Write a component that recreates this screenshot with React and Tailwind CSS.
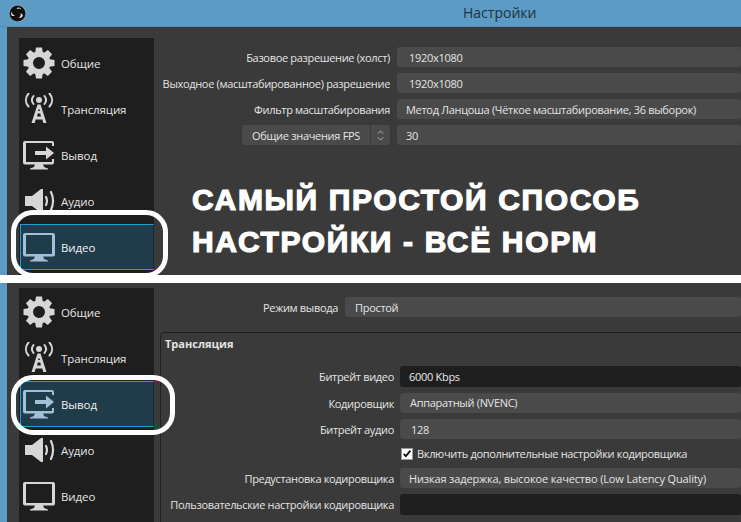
const font = { fontFamily: '"Open Sans","Noto Sans",sans-serif' };

function Gear({ className }) {
  const teeth = [0, 45, 90, 135, 180, 225, 270, 315];
  return (
    <svg viewBox="0 0 32 32" className={className} fill="currentColor">
      {teeth.map((a) => (
        <path key={a} d="M13 0.500h6l0.800 5h-7.600z" transform={`rotate(${a} 16 16)`} />
      ))}
      <path fillRule="evenodd" d="M16 4.500a11.500 11.500 0 1 1 0 23a11.500 11.500 0 1 1 0-23zM16 10a6 6 0 1 0 0 12a6 6 0 1 0 0-12z" />
    </svg>
  );
}
function Antenna({ className }) {
  return (
    <svg viewBox="0 0 32 32" className={className} fill="none" stroke="currentColor">
      <circle cx="16" cy="7" r="3" fill="currentColor" stroke="none" />
      <path strokeWidth="2" strokeLinecap="round" d="M10.500 3c-2 2.500-2 5.500 0 8M21.500 3c2 2.500 2 5.500 0 8M5.500 0.500c-3.500 4-3.500 9 0 13M26.500 0.500c3.500 4 3.500 9 0 13" />
      <path fill="currentColor" stroke="none" fillRule="evenodd" d="M14.500 11.500h3l6 18.500h-3.200l-1-3.500h-6.600l-1 3.500h-3.200zM14.700 20.500l-0.600 3h3.800l-0.600-3zM15.300 16.500l-0.200 1.500h1.800l-0.200-1.500z" />
    </svg>
  );
}
function MonitorArrow({ className }) {
  return (
    <svg viewBox="0 0 32 32" className={className} fill="currentColor">
      <path d="M2 2h27a2 2 0 0 1 2 2v3h-2V4H3v19h26v-3h2v3.500a2 2 0 0 1-2 2H2a2 2 0 0 1-2-2V4a2 2 0 0 1 2-2z" />
      <path d="M12 25h8l1 3 4 1.500v1H7v-1l4-1.500z" />
      <path d="M12 12h11V7.500l8 6.500-8 6.500V16H12z" />
    </svg>
  );
}
function Speaker({ className }) {
  return (
    <svg viewBox="0 0 32 32" className={className} fill="currentColor">
      <path d="M2 11h7l9-7h2v24h-2l-9-7H2z" />
      <path fill="none" stroke="currentColor" strokeWidth="2.200" strokeLinecap="round" d="M23 12c1.200 2.500 1.200 5.500 0 8M28 7c2.500 5.500 2.500 12.500 0 18" />
    </svg>
  );
}
function Monitor({ className }) {
  return (
    <svg viewBox="0 0 32 32" className={className} fill="currentColor">
      <path fillRule="evenodd" d="M2 2h28a2 2 0 0 1 2 2v19.500a2 2 0 0 1-2 2H2a2 2 0 0 1-2-2V4a2 2 0 0 1 2-2zM3 4v19h26V4z" />
      <path d="M12 25h8l1 3 4 1.500v1H7v-1l4-1.500z" />
    </svg>
  );
}

function NavItem({ Icon, label, selected }) {
  return (
    <div className={selected
      ? "h-[46px] flex items-center ml-[1px] pl-[2px] bg-[#203c4b] border border-[#1d9fdc] border-r-[#1a2a33] text-[#f0f0f0]"
      : "h-[46px] flex items-center pl-1 text-[#e4e4e4]"}>
      <Icon className={selected ? "w-8 h-8 shrink-0 text-[#a3bfd8]" : "w-8 h-8 shrink-0 text-[#d6d6d6]"} />
      <span className="ml-[6px] text-[11.500px] tracking-[-0.100px] leading-none pt-[2px]">{label}</span>
    </div>
  );
}

function Sidebar({ active, className }) {
  const items = [
    [Gear, "Общие"],
    [Antenna, "Трансляция"],
    [MonitorArrow, "Вывод"],
    [Speaker, "Аудио"],
    [Monitor, "Видео"],
  ];
  return (
    <div className={"w-[135px] shrink-0 bg-[#1e1e1e] flex flex-col overflow-hidden " + className}>
      {items.map(([Icon, label]) => (
        <NavItem key={label} Icon={Icon} label={label} selected={label === active} />
      ))}
    </div>
  );
}

function Field({ value, dark, h = "h-5", pad = "pl-3", track = "tracking-[-0.300px]" }) {
  return (
    <div className={`${h} flex-1 rounded-[3px] flex items-center ${pad} text-[11px] ${track} leading-none whitespace-nowrap ${dark ? "bg-[#1e1e1e] text-[#e8e8e8]" : "bg-[#4a4a4a] text-[#e4e4e4]"}`}>
      {value}
    </div>
  );
}

function Label({ children, width }) {
  return <div className={`${width} shrink-0 text-right text-[11px] tracking-[-0.330px] leading-none whitespace-nowrap text-[#e4e4e4]`}>{children}</div>;
}

function TopRight() {
  return (
    <div className="flex-1 min-w-0 relative">
      <div className="flex flex-col gap-[6px] pt-[9px]">
        <div className="flex items-center gap-[7px]"><Label width="w-[230px] pt-px">Базовое разрешение (холст)</Label><Field value="1920x1080" pad="pl-3 pt-px" /></div>
        <div className="flex items-center gap-[7px]"><Label width="w-[230px] pt-px">Выходное (масштабированное) разрешение</Label><Field value="1920x1080" pad="pl-3 pt-px" /></div>
        <div className="flex items-center gap-[7px]"><Label width="w-[230px] pt-px">Фильтр масштабирования</Label><Field value="Метод Ланцоша (Чёткое масштабирование, 36 выборок)" pad="pl-[9px] pt-px" /></div>
        <div className="flex items-center gap-[7px]">
          <div className="w-[230px] shrink-0 pl-[82px]">
            <div className="h-5 rounded-[3px] bg-[#4a4a4a] flex items-center justify-between">
              <span className="pl-[10px] pt-px text-[11px] tracking-[-0.300px] leading-none whitespace-nowrap text-[#e4e4e4]">Общие значения FPS</span>
              <span className="w-5 h-5 border-l border-[#3a3a3a] flex items-center justify-center">
                <svg viewBox="0 0 10 14" className="w-[9px] h-[13px]" fill="none" stroke="#b8b8b8" strokeWidth="1"><path d="M2 5l3-3 3 3M2 9l3 3 3-3" /></svg>
              </span>
            </div>
          </div>
          <Field value="30" pad="pl-[9px] pt-px" />
        </div>
      </div>
      <div className="mt-[34px] ml-[32px] text-white font-bold text-[30px] leading-[42px] tracking-[1.650px] whitespace-nowrap [-webkit-text-stroke:1.200px_white]" style={{ fontFamily: '"Liberation Sans",sans-serif' }}>
        <div>САМЫЙ ПРОСТОЙ СПОСОБ</div>
        <div>НАСТРОЙКИ - ВСЁ НОРМ</div>
      </div>
    </div>
  );
}

function BottomRight() {
  return (
    <div className="flex-1 min-w-0">
      <div className="flex items-center gap-[7px] pt-[9px]">
        <Label width="w-[178px]">Режим вывода</Label>
        <Field value="Простой" pad="pl-[10px]" />
      </div>
      <div className="mt-[15px] h-[300px] border-t border-l border-[#1f1f1f] rounded-tl-[5px] pt-[4px]">
        <div className="pl-[4px] text-[11px] leading-[14px] font-bold text-[#e4e4e4]">Трансляция</div>
        <div className="mt-[15px] flex flex-col gap-[6px]">
          <div className="flex items-center gap-[6px]"><Label width="w-[233px]">Битрейт видео</Label><Field value="6000 Kbps" dark h="h-[21px]" pad="pl-[9px]" /></div>
          <div className="flex items-center gap-[6px]"><Label width="w-[233px]">Кодировщик</Label><Field value="Аппаратный (NVENC)" pad="pl-[10px] pb-px" /></div>
          <div className="flex items-center gap-[6px]"><Label width="w-[233px]">Битрейт аудио</Label><Field value="128" pad="pl-[11px]" /></div>
          <div className="flex items-center gap-[6px] h-[17px]">
            <div className="w-[233px] shrink-0" />
            <div className="flex items-center">
              <span className="w-3 h-3 ml-[1px] bg-white flex items-center justify-center border border-[#9a9a9a]">
                <svg viewBox="0 0 12 12" className="w-[11px] h-[11px]" fill="none" stroke="#111" strokeWidth="2.200"><path d="M2 6.500l2.700 2.700L10 2.500" /></svg>
              </span>
              <span className="ml-[4px] text-[11px] tracking-[-0.330px] leading-none whitespace-nowrap text-[#e4e4e4]">Включить дополнительные настройки кодировщика</span>
            </div>
          </div>
          <div className="flex items-center gap-[6px]"><Label width="w-[233px]">Предустановка кодировщика</Label><Field value="Низкая задержка, высокое качество (Low Latency Quality)" pad="pl-[9px]" track="tracking-[-0.150px]" /></div>
          <div className="flex items-center gap-[6px]"><Label width="w-[233px]">Пользовательские настройки кодировщика</Label><Field value="" dark h="h-[21px]" /></div>
        </div>
      </div>
    </div>
  );
}

export default function App() {
  return (
    <div className="relative w-[741px] h-[522px] overflow-hidden bg-[#5b9bc4]" style={font}>
      <div className="h-[27px] flex items-center border-b border-[#4f8cb3]">
        <svg viewBox="0 0 16 16" className="w-[17px] h-[17px] ml-[9px] shrink-0">
          <circle cx="8" cy="8" r="7.800" fill="#111" stroke="#ddd" strokeWidth="0.400" />
          <path d="M8 2.500a3 3 0 0 1 3.600 2.200a3.200 3.200 0 0 0-4.400-.6a2.500 2.500 0 0 1 .8-1.600zM3 10.300a3 3 0 0 1-.2-4a3.200 3.200 0 0 0 2.800 3.400a2.500 2.500 0 0 1-2.600.6zM12.900 10a3 3 0 0 1-3.800 1.800a3.200 3.200 0 0 0 1.700-4.100a2.500 2.500 0 0 1 2.100 2.300z" fill="#eee" />
        </svg>
        <span className="ml-[437px] text-[14px] leading-none text-[#1e3442]">Настройки</span>
      </div>
      <div className="ml-[7px] h-[248px] bg-[#3a3a3a] flex pl-[12px] pt-[11px] overflow-hidden">
        <Sidebar active="Видео" className="mr-[6px] h-[237px] pt-[2px]" />
        <TopRight />
      </div>
      <div className="h-2 bg-white" />
      <div className="ml-[7px] h-[239px] bg-[#3a3a3a] flex pl-[12px] pt-[5px] overflow-hidden">
        <Sidebar active="Вывод" className="mr-[6px] h-[234px] pt-px" />
        <BottomRight />
      </div>
      <div className="absolute left-[11px] top-[210px] w-[157px] h-[68px] border-[5px] border-white rounded-[22px]" />
      <div className="absolute left-[11px] top-[375px] w-[164px] h-[60px] border-[5px] border-white rounded-[22px]" />
    </div>
  );
}
